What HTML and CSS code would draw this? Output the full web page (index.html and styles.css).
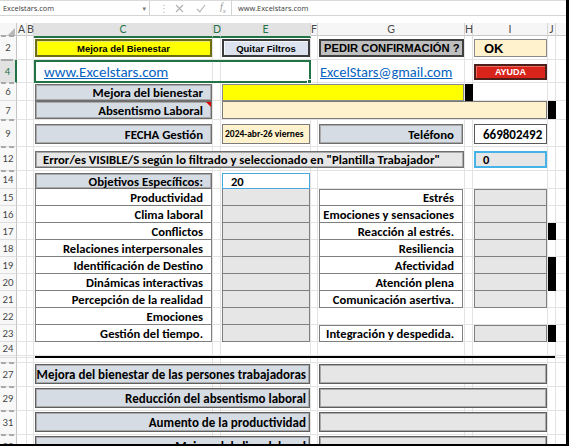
FILE: index.html
```html
<!DOCTYPE html>
<html lang="es">
<head>
<meta charset="utf-8">
<title>Excelstars</title>
<link rel="stylesheet" href="styles.css">
</head>
<body>
<div class="app">
  <div class="fbar">
    <div class="namebox"><span>Excelstars.com</span><span class="dd">&#9662;</span></div>
    <div class="fmid">
      <span class="dots">&#8942;</span>
      <svg class="ico" width="9" height="9" viewBox="0 0 9 9"><path d="M1 1 L8 8 M8 1 L1 8" stroke="#b0b0b0" stroke-width="1.1" fill="none"/></svg>
      <svg class="ico" width="10" height="9" viewBox="0 0 10 9"><path d="M1 5 L3.8 8 L9 1" stroke="#b0b0b0" stroke-width="1.1" fill="none"/></svg>
      <span class="fx">f<sub>x</sub></span>
    </div>
    <div class="formula">www.Excelstars.com</div>
  </div>
  <div class="band"></div>
  <div class="grid">
    <div class="row hdr">
      <div class="corner"><svg width="9" height="9" viewBox="0 0 9 9"><polygon points="9,0 9,9 0,9" fill="#b9b9b9"/></svg></div>
      <div class="ch">A</div>
      <div class="ch">B</div>
      <div class="ch sel">C</div>
      <div class="ch sel">D</div>
      <div class="ch sel">E</div>
      <div class="ch">F</div>
      <div class="ch">G</div>
      <div class="ch">H</div>
      <div class="ch">I</div>
      <div class="ch">J</div>
      <div class="ch last"></div>
    </div>

    <div class="row r2">
      <div class="rh h">2</div>
      <div class="cC box btn-y">Mejora del Bienestar</div>
      <div class="cE box btn-g">Quitar Filtros</div>
      <div class="cG box pedir">PEDIR CONFIRMACIÓN ?</div>
      <div class="cI box ok">OK</div>
    </div>

    <div class="row r4">
      <div class="rh h rsel">4</div>
      <div class="cCE box selbox"><a class="link big">www.Excelstars.com</a><span class="handle"></span></div>
      <div class="cG box plain"><a class="link mail">ExcelStars@gmail.com</a></div>
      <div class="cI box ayuda">AYUDA</div>
    </div>

    <div class="row r6">
      <div class="rh h">6</div>
      <div class="cC box lab">Mejora del bienestar</div>
      <div class="cEG box yel"></div>
      <div class="cH box blk"></div>
    </div>

    <div class="row r7">
      <div class="rh">7</div>
      <div class="cC box lab note">Absentismo Laboral</div>
      <div class="cEI box beige"></div>
      <div class="cJ box blk"></div>
    </div>

    <div class="row r9">
      <div class="rh h">9</div>
      <div class="cC box lab">FECHA Gestión</div>
      <div class="cE box beige date">2024-abr-26 viernes</div>
      <div class="cG box lab">Teléfono</div>
      <div class="cI box phone">669802492</div>
    </div>

    <div class="row r12">
      <div class="rh h">12</div>
      <div class="cCG box err">Error/es VISIBLE/S según lo filtrado y seleccionado en "Plantilla Trabajador"</div>
      <div class="cI box zero">0</div>
    </div>

    <div class="row r14">
      <div class="rh h">14</div>
      <div class="cC box lab">Objetivos Específicos:</div>
      <div class="cE box twenty">20</div>
    </div>

    <div class="row r1x">
      <div class="rh">15</div>
      <div class="cC box item">Productividad</div>
      <div class="cE box val"></div>
      <div class="cG box item first">Estrés</div>
      <div class="cI box val first"></div>
    </div>
    <div class="row r1x">
      <div class="rh">16</div>
      <div class="cC box item">Clima laboral</div>
      <div class="cE box val"></div>
      <div class="cG box item">Emociones y sensaciones</div>
      <div class="cI box val"></div>
    </div>
    <div class="row r1x">
      <div class="rh">17</div>
      <div class="cC box item">Conflictos</div>
      <div class="cE box val"></div>
      <div class="cG box item">Reacción al estrés.</div>
      <div class="cI box val"></div>
      <div class="cJ box blk"></div>
    </div>
    <div class="row r1x">
      <div class="rh">18</div>
      <div class="cC box item">Relaciones interpersonales</div>
      <div class="cE box val"></div>
      <div class="cG box item">Resiliencia</div>
      <div class="cI box val"></div>
    </div>
    <div class="row r1x">
      <div class="rh">19</div>
      <div class="cC box item">Identificación de Destino</div>
      <div class="cE box val"></div>
      <div class="cG box item">Afectividad</div>
      <div class="cI box val"></div>
      <div class="cJ box blk"></div>
    </div>
    <div class="row r1x">
      <div class="rh">20</div>
      <div class="cC box item">Dinámicas interactivas</div>
      <div class="cE box val"></div>
      <div class="cG box item">Atención plena</div>
      <div class="cI box val"></div>
      <div class="cJ box blk"></div>
    </div>
    <div class="row r1x">
      <div class="rh">21</div>
      <div class="cC box item">Percepción de la realidad</div>
      <div class="cE box val"></div>
      <div class="cG box item">Comunicación asertiva.</div>
      <div class="cI box val"></div>
    </div>
    <div class="row r1x">
      <div class="rh">22</div>
      <div class="cC box item">Emociones</div>
      <div class="cE box val"></div>
    </div>
    <div class="row r1x">
      <div class="rh">23</div>
      <div class="cC box item">Gestión del tiempo.</div>
      <div class="cE box val"></div>
      <div class="cG box item first">Integración y despedida.</div>
      <div class="cI box val first"></div>
      <div class="cJ box blk"></div>
    </div>
    <div class="row r24">
      <div class="rh">24</div>
    </div>
    <div class="row rline">
      <div class="rh"></div>
      <div class="cCK thick"></div>
    </div>
    <div class="row rgap">
      <div class="rh"></div>
    </div>

    <div class="row rb">
      <div class="rh h">27</div>
      <div class="cCE box big-lab">Mejora del bienestar de las persones trabajadoras</div>
      <div class="cGI box big-val"></div>
    </div>
    <div class="row rb">
      <div class="rh h">29</div>
      <div class="cCE box big-lab">Reducción del absentismo laboral</div>
      <div class="cGI box big-val"></div>
    </div>
    <div class="row rb">
      <div class="rh h">31</div>
      <div class="cCE box big-lab">Aumento de la productividad</div>
      <div class="cGI box big-val"></div>
    </div>
    <div class="row rb">
      <div class="rh h">33</div>
      <div class="cCE box big-lab">Mejora del clima laboral</div>
      <div class="cGI box big-val"></div>
    </div>
  </div>
</div>
</body>
</html>
```
FILE: styles.css
```css
* { box-sizing: border-box; }
html, body { margin: 0; padding: 0; }
body { background: #000; width: 569px; height: 446px; overflow: hidden; font-family: Carlito, Lato, "Open Sans", sans-serif; }
.app { width: 566px; height: 444px; background: #fff; overflow: hidden; }

/* formula bar */
.fbar { height: 16px; display: flex; align-items: stretch; background: #fff; border-top: 1px solid #dadada; border-bottom: 1px solid #d4d4d4; font-family: "Open Sans", "DejaVu Sans", sans-serif; font-size: 7.4px; color: #3a3a3a; }
.namebox { width: 150px; display: flex; align-items: center; justify-content: space-between; padding: 0 3px 0 3px; border-right: 1px solid #d4d4d4; }
.dd { color: #777; font-size: 7px; }
.fmid { width: 81px; display: flex; align-items: center; padding-left: 9px; gap: 12px; }
.dots { color: #b8b8b8; font-size: 10px; width: 4px; }
.ico { display: block; }
.fx { font-family: "Liberation Serif", serif; font-style: italic; color: #999; font-size: 10px; margin-left: 2px; }
.fx sub { font-size: 7px; }
.formula { flex: 1; display: flex; align-items: center; padding-left: 6px; border-left: 1px solid #d4d4d4; }
.band { height: 7px; background: #fff; }

/* grid */
.grid {
  background-image:
    linear-gradient(#e3e3e3, #e3e3e3), linear-gradient(#e3e3e3, #e3e3e3),
    linear-gradient(#e3e3e3, #e3e3e3), linear-gradient(#e3e3e3, #e3e3e3),
    linear-gradient(#e3e3e3, #e3e3e3), linear-gradient(#e3e3e3, #e3e3e3),
    linear-gradient(#e3e3e3, #e3e3e3), linear-gradient(#e3e3e3, #e3e3e3),
    linear-gradient(#e3e3e3, #e3e3e3), linear-gradient(#e3e3e3, #e3e3e3);
  background-size: 1px 100%;
  background-repeat: no-repeat;
  background-position: 26px 0, 33px 0, 212px 0, 220px 0, 310px 0, 317px 0, 464px 0, 472px 0, 547px 0, 555px 0;
}
.row {
  display: grid;
  grid-template-columns: 17px 10px 7px 179px 8px 90px 7px 147px 8px 75px 8px 10px;
  background: linear-gradient(#e3e3e3, #e3e3e3) left bottom / 100% 1px no-repeat;
}
.hdr { height: 13px; background: #f6f6f6; border-bottom: 1px solid #c9c9c9; }
.corner { display: flex; align-items: flex-end; justify-content: flex-end; padding: 0 1px 1px 0; border-right: 1px solid #c9c9c9; }
.corner svg { display: block; }
.ch { font-family: Lato, "Open Sans", sans-serif; font-size: 10.5px; color: #4a4a4a; text-align: center; line-height: 13px; border-right: 1px solid #d6d6d6; }
.ch.sel { background: #e2e2e2; color: #217346; border-bottom: 2px solid #217346; }
.ch.last { border-right: none; }

.rh { grid-column: 1; font-family: Lato, "Open Sans", sans-serif; font-size: 9.5px; color: #444; display: flex; align-items: center; justify-content: center; background: #f8f8f8; border-right: 1px solid #c4c4c4; border-bottom: 1px solid #dedede; position: relative; }
.rh.h::before { content: ""; position: absolute; left: 1px; right: 2px; top: -1px; border-top: 2px dashed #a8a8a8; }
.rh.rsel { color: #217346; background: #e2e2e2; border-right: 2px solid #217346; }

.r2 { height: 24px; }
.r4 { height: 23px; }
.r6 { height: 18px; }
.r7 { height: 19px; }
.r9 { height: 27px; }
.r12 { height: 24px; }
.r14 { height: 18px; }
.r1x { height: 17px; }
.r24 { height: 14px; }
.rline { height: 2px; }
.rgap { height: 5px; }
.rb { height: 24px; }

/* placement */
.cC { grid-column: 4; }
.cCE { grid-column: 4 / 7; }
.cCG { grid-column: 4 / 9; }
.cCK { grid-column: 4 / 12; }
.cE { grid-column: 6; }
.cEG { grid-column: 6 / 9; }
.cEI { grid-column: 6 / 11; }
.cG { grid-column: 8; }
.cGI { grid-column: 8 / 11; }
.cH { grid-column: 9; }
.cI { grid-column: 10; }
.cJ { grid-column: 11; }

.box { display: flex; align-items: center; font-weight: 700; color: #000; min-width: 0; white-space: nowrap; overflow: hidden; }

/* row 2 buttons */
.r2 .box { margin: 3px 1px 3px 1px; }
.btn-y { background: #ffff00; border: 2px solid #6f6f12; box-shadow: inset 1px 1px 0 #e6e67a; justify-content: center; font-family: "Liberation Sans", Arial, sans-serif; font-size: 9.5px; }
.btn-g { background: #dde3ee; border: 2px solid #3b3b3b; box-shadow: inset 1px 1px 0 #f4f6fa; justify-content: center; font-family: "Liberation Sans", Arial, sans-serif; font-size: 9.5px; }
.pedir { background: #bfbfbf; border: 2px solid #404040; padding-left: 3px; font-family: "Liberation Sans", Arial, sans-serif; font-size: 11.2px; }
.ok { background: #fff2cc; border: 1px solid #8a8a8a; padding-left: 9px; font-family: "Liberation Sans", Arial, sans-serif; font-size: 13px; }

/* row 4 */
.selbox { border: 2px solid #217346; padding-left: 8px; position: relative; overflow: visible; }
.handle { position: absolute; right: -3px; bottom: -3px; width: 5px; height: 5px; background: #217346; border: 1px solid #fff; }
.link { color: #0563c1; text-decoration: underline; font-weight: 400; }
.link.big { font-size: 15px; }
.plain { padding-left: 2px; }
.link.mail { font-size: 14.5px; }
.r4 .ayuda { margin: 4px 1px 3px 1px; background: #d9241b; border: 2px solid #4d1f1a; box-shadow: inset 1px 1px 0 #ee6a60; color: #fff; justify-content: center; font-family: "Liberation Sans", Arial, sans-serif; font-size: 9px; }

/* labels */
.lab { background: #d6dce4; border: 1px solid #6f6f6f; box-shadow: inset 0 0 0 1px #a9a9a9; justify-content: flex-end; padding-right: 8px; font-size: 12.8px; }
.r6 .box { margin: 1px 1px 0 1px; }
.r6 .blk { margin: 1px 0 0 0; }
.r7 .box { margin: 0 1px 1px 1px; }
.r7 .blk { margin: 0 0 1px 0; }
.yel { background: #ffff00; border: 1px solid #8a8a8a; }
.beige { background: #fff2cc; border: 1px solid #7a7a7a; }
.blk { background: #000; }
.note { position: relative; }
.note::after { content: ""; position: absolute; top: 0; right: 0; border-left: 5px solid transparent; border-top: 5px solid #e00000; }

.r9 .box { margin: 4px 1px 3px 1px; }
.date { font-size: 9.5px; padding-left: 2px; }
.r9 .cG { margin-right: 2px; }
.phone { background: #fff; border: 1px solid #595959; padding-left: 8px; font-size: 13px; }

.r12 .box { margin: 4px 1px 3px 1px; }
.err { background: #e7e6e6; border: 1px solid #6f6f6f; box-shadow: inset 0 0 0 1px #a9a9a9; padding-left: 7px; font-size: 12.7px; }
.zero { background: #e7e6e6; border: 2px solid #45b3e7; padding-left: 7px; font-size: 12.5px; }

.r14 .box { margin: 2px 1px 0 1px; }
.twenty { background: #fff; border: 1px solid #4aa8e0; padding-left: 8px; font-size: 12.5px; }

/* item rows */
.item { background: #fff; border: 1px solid #7f7f7f; border-top: none; justify-content: flex-end; padding-right: 8px; font-size: 12.6px; margin: 0 1px; }
.val { background: #e7e6e6; border: 1px solid #7f7f7f; border-top: none; margin: 0 1px; }
.first { border-top: 1px solid #7f7f7f; }
.r1x .cG { margin-right: 2px; }

.thick { background: #000; margin-left: 1px; margin-right: 1px; }

.rb .box { margin: 1px 1px 3px 1px; }
.big-lab { background: #d6dce4; border: 1px solid #5f5f5f; box-shadow: inset 0 0 0 1px #a9a9a9; justify-content: flex-end; padding-right: 3px; font-size: 13px; }
.big-val { background: #e7e6e6; border: 1px solid #5f5f5f; box-shadow: inset 0 0 0 1px #a9a9a9; }
```
